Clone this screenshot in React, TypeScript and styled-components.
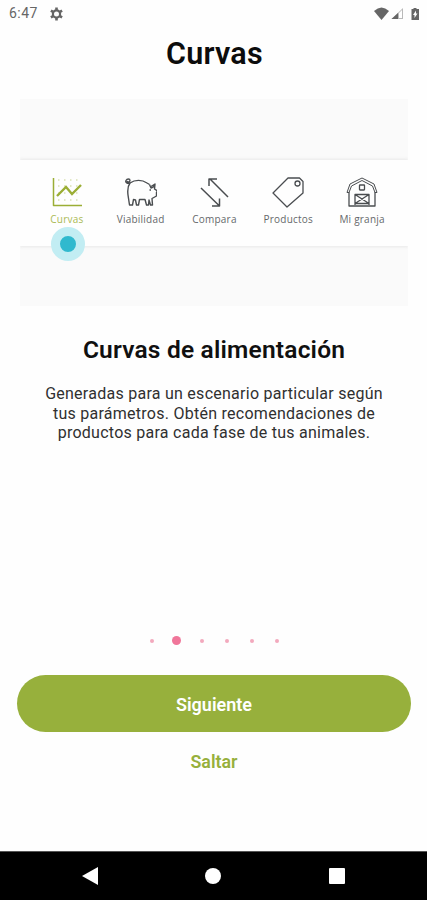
import React from 'react';
import styled, { createGlobalStyle } from 'styled-components';

const GlobalStyle = createGlobalStyle`
  * { box-sizing: border-box; }
  body { margin: 0; background: #fefefe; font-family: Roboto, "Liberation Sans", sans-serif; }
  svg { display: block; }
`;

const green = '#97b03c';

const Screen = styled.div`
  width: 427px;
  height: 900px;
  display: flex;
  flex-direction: column;
  overflow: hidden;
  background: #fefefe;
`;

const StatusBar = styled.header`
  height: 27px;
  display: flex;
  align-items: center;
  padding: 0 7px 0 9px;
  color: #666;
`;

const Clock = styled.span`
  width: 41px;
  font-size: 14px;
  line-height: 27px;
  letter-spacing: 0.45px;
`;

const SystemIcons = styled.div`
  margin-left: auto;
  display: flex;
  align-items: center;
`;

const Title = styled.h1`
  margin: 8px 0 0;
  padding-left: 2px;
  height: 37px;
  font-size: 30.5px;
  line-height: 37px;
  font-weight: 600;
  letter-spacing: 0.25px;
  text-align: center;
  color: #0c0c0c;
`;

const Preview = styled.section`
  width: 388px;
  height: 207px;
  margin: 27px 0 0 20px;
  padding-top: 61px;
  background: #fafafa;
  overflow: hidden;
`;

const TabBar = styled.nav`
  height: 86px;
  padding: 0 9px 0 10px;
  display: grid;
  grid-template-columns: repeat(5, 1fr);
  background: #fefefe;
  box-shadow: 0 -1px 3px #eaeaea, 0 1px 3px #eaeaea;
`;

const Tab = styled.div<{ $active?: boolean }>`
  position: relative;
  display: flex;
  flex-direction: column;
  align-items: center;
  padding-top: 16px;
  color: ${(p) => (p.$active ? '#9bae35' : '#4a4d50')};
`;

const TabLabel = styled.span`
  margin-top: 5px;
  font-family: "Open Sans", "Noto Sans", sans-serif;
  font-size: 10px;
  line-height: 13px;
  letter-spacing: 0.22px;
  white-space: nowrap;
  opacity: 0.85;
`;

const TouchMarker = styled.span`
  position: absolute;
  top: 67px;
  left: 20.7px;
  width: 34px;
  height: 34px;
  border-radius: 50%;
  border: 9px solid #c2edf3;
  background: #30b9ce;
`;

const Heading = styled.h2`
  margin: 28px 0 0;
  padding-left: 1px;
  font-size: 24.5px;
  line-height: 32px;
  font-weight: 600;
  letter-spacing: 0.2px;
  text-align: center;
  color: #101010;
`;

const Description = styled.p`
  margin: 18px 0 0;
  padding-left: 1px;
  font-size: 16px;
  line-height: 19.5px;
  letter-spacing: 0.26px;
  text-align: center;
  white-space: pre-line;
  color: #303030;
`;

const Pager = styled.div`
  width: 150px;
  height: 10px;
  margin: 193px 0 0 139px;
  display: grid;
  grid-template-columns: repeat(6, 1fr);
  place-items: center;
`;

const Dot = styled.span<{ $active: boolean }>`
  width: ${(p) => (p.$active ? 9 : 4)}px;
  height: ${(p) => (p.$active ? 9 : 4)}px;
  border-radius: 50%;
  background: ${(p) => (p.$active ? '#f0769a' : '#f3a9bd')};
`;

const PrimaryButton = styled.button`
  width: 394px;
  height: 57px;
  flex: none;
  margin: 29px 0 0 17px;
  padding: 3px 0 0;
  border: 0;
  border-radius: 29px;
  background: ${green};
  color: #fff;
  font: 600 18px/24px Roboto, sans-serif;
`;

const SkipButton = styled.button`
  align-self: center;
  margin-top: 18px;
  padding: 0 0 0 1px;
  border: 0;
  background: none;
  color: ${green};
  font: 600 17.8px/24px Roboto, sans-serif;
`;

const NavigationBar = styled.footer`
  height: 49px;
  margin-top: auto;
  padding: 0 28px;
  display: grid;
  grid-template-columns: repeat(3, 1fr);
  place-items: center;
  background: #000;
  border-top: 1px solid #555;
`;

const TabIcon = ({ children, width = 1.3 }: { children: React.ReactNode; width?: number }) => (
  <svg width="32" height="32" viewBox="0 0 32 32" fill="none" stroke="currentColor" strokeWidth={width} strokeLinejoin="round">
    {children}
  </svg>
);

const ChartIcon = () => (
  <TabIcon>
    <path d="M2.500 2v27.500H31" strokeWidth="1.500" />
    <path d="M7 4h24M7 10h24M7 17h24M7 24h24" strokeWidth="1" strokeDasharray="1.500 4.500" opacity=".55" />
    <path d="m6 20 9-9 6 7 9-9" strokeWidth="2.400" strokeLinejoin="miter" />
  </TabIcon>
);

const PigIcon = () => (
  <TabIcon width={1.4}>
    <path d="M5 7C2.500 8 0 6.500 1 4.500s4-2 4 0-2.500 2-3 .5" />
    <path d="M5 7C10 3.500 17 3.500 22 7l2.500 1.500M5 7c-3 4-2.500 8-2 12l1.500 10h3l1-5.500 2 .5 1 5h2l1-5.500h5.500l1.500 5.500h2l.5-5 1.500 5h2l-.5-6.500 4.500-2.500v-3.500l1-1.500-3-2 .5-5-4 2.500" />
    <path d="M24.500 8.500 26 12l3-1.500M24.500 14h1.500" />
  </TabIcon>
);

const CompareIcon = () => (
  <TabIcon width={1.5}>
    <path d="M30 21 12 3M11 10V3h8M3 12l18.500 18M14 30h7.500v-7.500" />
  </TabIcon>
);

const TagIcon = () => (
  <TabIcon>
    <path d="M1 17 16 2h11.500l3.500 3.500V17L15 31Z" />
    <circle cx="25.500" cy="7.500" r="2.500" />
  </TabIcon>
);

const BarnIcon = () => (
  <TabIcon>
    <path d="M1 16.500 4 8 16 2l12 6 3 8.500h-2L26.500 10 16 4.500 5.500 10 3 16.500Z" strokeWidth="1" />
    <path d="M3 16v14h26V16M9 29V18.500h14V29M9 18.500l14 9M23 18.500l-14 9M9 27.500h14" />
    <rect x="13.500" y="9" width="5" height="5" rx=".5" />
  </TabIcon>
);

const tabs = [
  { label: 'Curvas', Icon: ChartIcon },
  { label: 'Viabilidad', Icon: PigIcon },
  { label: 'Compara', Icon: CompareIcon },
  { label: 'Productos', Icon: TagIcon },
  { label: 'Mi granja', Icon: BarnIcon },
];

export default function App() {
  return (
    <Screen>
      <GlobalStyle />
      <StatusBar>
        <Clock>6:47</Clock>
        <svg width="13" height="14" viewBox="0 0 13 14" fill="none" stroke="currentColor">
          <circle cx="6.500" cy="7" r="3.600" strokeWidth="2.200" />
          <path d="M6.500 .5v3M6.500 10.500v3M.9 3.700l2.600 1.500M9.500 8.800l2.600 1.500M.9 10.300l2.600-1.500M9.500 5.200l2.600-1.500" strokeWidth="2.600" />
        </svg>
        <SystemIcons>
          <svg width="46" height="14" viewBox="0 0 46 14" fill="currentColor">
            <path d="M0 4Q7.500-3 15 4L7.500 13Z" />
            <path d="M29 1v11H17.500Z" fill="#b9b9b9" />
            <path d="M24 6v6h-6.500Z" />
            <path d="M25 6v5h3V3Z" fill="#fff" />
            <path fillRule="evenodd" d="M39.500 1h3v1H45v11h-7.500V2h2ZM42 3.500 39 8h1.500v3l3-4.500H42Z" />
          </svg>
        </SystemIcons>
      </StatusBar>
      <Title>Curvas</Title>
      <Preview>
        <TabBar>
          {tabs.map(({ label, Icon }, i) => (
            <Tab key={label} $active={i === 0}>
              <Icon />
              <TabLabel>{label}</TabLabel>
              {i === 0 && <TouchMarker />}
            </Tab>
          ))}
        </TabBar>
      </Preview>
      <Heading>Curvas de alimentación</Heading>
      <Description>
        {'Generadas para un escenario particular según\ntus parámetros. Obtén recomendaciones de\nproductos para cada fase de tus animales.'}
      </Description>
      <Pager>
        {[0, 1, 2, 3, 4, 5].map((page) => (
          <Dot key={page} $active={page === 1} />
        ))}
      </Pager>
      <PrimaryButton>Siguiente</PrimaryButton>
      <SkipButton>Saltar</SkipButton>
      <NavigationBar>
        <svg width="16" height="18" viewBox="0 0 16 18" fill="#fff"><path d="M0 9 16 0v18Z" /></svg>
        <svg width="16" height="16" viewBox="0 0 16 16" fill="#fff"><circle cx="8" cy="8" r="8" /></svg>
        <svg width="16" height="16" viewBox="0 0 16 16" fill="#fff"><rect width="16" height="16" rx="1" /></svg>
      </NavigationBar>
    </Screen>
  );
}
